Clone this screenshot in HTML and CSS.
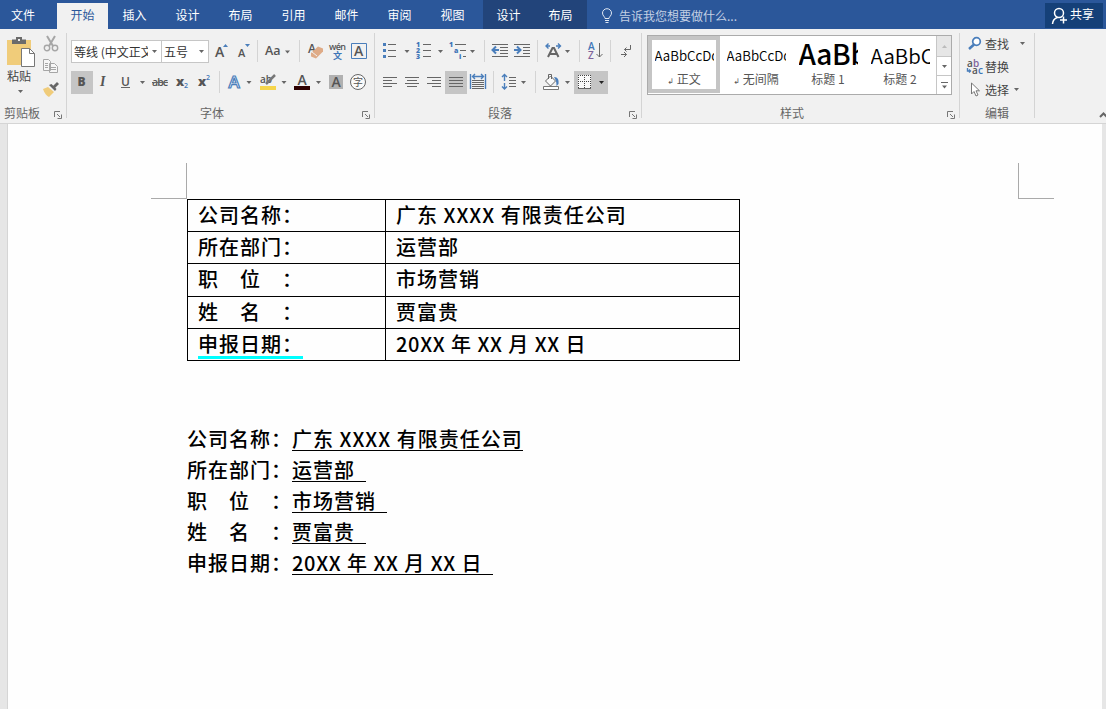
FILE: index.html
```html
<!DOCTYPE html>
<html lang="zh-CN">
<head>
  <meta charset="UTF-8">
  <title>Word</title>
  <link rel="stylesheet" href="styles.css">
</head>
<body>
  <nav class="tabs">
    <a class="tab file">文件</a>
    <a class="tab active">开始</a>
    <a class="tab">插入</a>
    <a class="tab">设计</a>
    <a class="tab">布局</a>
    <a class="tab">引用</a>
    <a class="tab">邮件</a>
    <a class="tab">审阅</a>
    <a class="tab">视图</a>
    <div class="table-tools">
      <a class="tab">设计</a>
      <a class="tab">布局</a>
    </div>
    <div class="tell-me">
      <svg width="12" height="16" viewBox="0 0 12 16"><path d="M4 10.500c0-2-2.500-2.500-2.500-5.500a4.500 4.300 0 0 1 9 0c0 3-2.500 3.500-2.500 5.500zM4 12.500h4M4.500 14.500h3" class="line-white"/></svg>
      <span>告诉我您想要做什么...</span>
    </div>
    <button class="share">
      <svg width="17" height="18" viewBox="0 0 17 18"><circle cx="8" cy="6" r="4.500" class="person"/><path d="M1.500 17c.3-3.500 2-5.800 5-6.500M12.500 9.500v7M9 13h7" class="person"/></svg>
      <span>共享</span>
    </button>
  </nav>

  <div class="ribbon">
    <section class="group clipboard">
      <div class="clip-body">
        <div class="paste">
          <svg width="30" height="32" viewBox="0 0 30 32">
            <path d="M2 4h24v25H2z" fill="#f0cc7a"/>
            <path d="M7 8V3.500h4V1h6v2.500h4V8z" fill="#6b6b6b"/>
            <path d="M13 3h2v2h-2z" fill="#f1f1f1"/>
            <path d="M16.500 12.500h8l5 5v13h-13z" fill="#fff" stroke="#777"/>
            <path d="M24.500 12.500v5h5" fill="none" stroke="#777"/>
          </svg>
          <span>粘贴</span>
          <svg width="5" height="3" viewBox="0 0 5 3"><path d="M0 0h5L2.500 3z" class="caret"/></svg>
        </div>
        <div class="clip-side">
          <svg width="18" height="18" viewBox="0 0 18 18"><path d="M5 1l6 10M13 1L7 11" stroke="#a6a6a6" stroke-width="2" fill="none"/><circle cx="5" cy="13" r="2.700" class="ring"/><circle cx="13" cy="13" r="2.700" class="ring"/></svg>
          <svg width="18" height="18" viewBox="0 0 18 18"><path d="M1.500 1.500h5l2 2v9h-7zM7.500 5.500h5l3 3v6h-8z" fill="#f6f6f6" stroke="#a6a6a6"/><path d="M3 5.500h3M3 7.500h3M3 9.500h3M9 9.500h5M9 11.500h5" stroke="#a6a6a6"/></svg>
          <svg width="18" height="18" viewBox="0 0 18 18"><path d="M1 8l5-2 6 5-5 5c-2-1-5-4-6-8z" fill="#f0cc7a"/><path d="M7 4l6 6 1.500-2-5-5z" fill="#666"/><path d="M10 6l5-5 2 2-5 5z" fill="#666"/></svg>
        </div>
      </div>
      <div class="label">剪贴板<svg class="launcher" width="8" height="8" viewBox="0 0 8 8"><path d="M.5 6V.500H6M3 3l3 3M7.500 3.500v4h-4" /></svg></div>
    </section>

    <section class="group font">
      <div class="row">
        <div class="combo name"><span>等线 (中文正文)</span><svg width="5" height="3" viewBox="0 0 5 3"><path d="M0 0h5L2.500 3z" class="caret"/></svg></div>
        <div class="combo size"><span>五号</span><svg width="5" height="3" viewBox="0 0 5 3"><path d="M0 0h5L2.500 3z" class="caret"/></svg></div>
        <svg width="23" height="23"><text x="6" y="17" font-size="14" class="g">A</text><path d="M14 7h5l-2.500-3z" class="blue"/></svg>
        <svg width="23" height="23"><text x="6" y="17" font-size="11" class="g">A</text><path d="M13 4h5l-2.500 3z" class="blue"/></svg>
        <i class="sep after"></i>
        <svg width="41" height="23"><text x="7" y="15" font-size="12.500" class="g">Aa</text><path d="M27 10.500h5l-2.500 3z" class="caret"/></svg>
        <i class="sep"></i>
        <svg width="25" height="23"><text x="8" y="13" font-size="12" class="g">A</text><path d="M11 13l7-6.500 5 2v3l-7 7-5-2z" fill="#dfab87"/><path d="M12 12l5 4" stroke="#f1f1f1"/></svg>
        <svg width="23" height="23"><text x="4" y="10" font-size="9" class="g" textLength="17">wén</text><text x="8" y="19" font-size="9" class="b cjk">文</text></svg>
        <svg width="23" height="23"><path d="M3.500 3.500h15v15h-15z" fill="none" stroke="#4a7ebb"/><text x="6" y="16" font-size="14" class="g">A</text></svg>
      </div>
      <div class="row">
        <svg class="on" width="22" height="23"><text x="6.500" y="15" font-size="12" class="g bold">B</text></svg>
        <svg width="22" height="23"><text x="7" y="15" font-size="14" class="g italic">I</text></svg>
        <svg width="33" height="23"><text x="6" y="15" font-size="12" class="g">U</text><path d="M6 16.500h9" class="gl"/><path d="M25 10h5l-2.500 3z" class="caret"/></svg>
        <svg width="23" height="23"><text x="4" y="15" font-size="10.500" class="g" textLength="16">abc</text><path d="M4 11.500h16" class="gl"/></svg>
        <svg width="22" height="23"><text x="5" y="15" font-size="13" class="g bold">x</text><text x="13" y="17" font-size="7" class="b">2</text></svg>
        <svg width="26" height="23"><text x="5" y="15" font-size="13" class="g bold">x</text><text x="13" y="9" font-size="7" class="b">2</text></svg>
        <i class="sep"></i>
        <svg width="34" height="23"><text x="8.500" y="17" font-size="17" class="outline">A</text><path d="M26.500 10h5L29 13z" class="caret"/></svg>
        <svg width="35" height="23"><text x="6" y="11.500" font-size="10" class="g">ab</text><path d="M21 4l-9 9" stroke="#777" stroke-width="2.500"/><path d="M6 15h16v4H6z" fill="#f5d54c"/><path d="M27.500 10h5L30 13z" class="caret"/></svg>
        <svg width="35" height="23"><text x="8.500" y="14" font-size="14" class="g">A</text><path d="M5 15h16v4H5z" fill="#2d0000"/><path d="M27 10h5l-2.500 3z" class="caret"/></svg>
        <svg width="23" height="23"><path d="M5 4h14v14H5z" fill="#b1b1b1"/><text x="7.500" y="16" font-size="14" class="g">A</text></svg>
        <svg width="23" height="23"><circle cx="11" cy="11" r="7.500" fill="#fafafa" stroke="#666"/><text x="6" y="15" font-size="10" class="g thin cjk">字</text></svg>
      </div>
      <div class="label">字体<svg class="launcher" width="8" height="8" viewBox="0 0 8 8"><path d="M.5 6V.500H6M3 3l3 3M7.500 3.500v4h-4" /></svg></div>
    </section>

    <section class="group para">
      <div class="row">
        <svg width="34" height="23"><path d="M4 3h3v3H4zM4 9h3v3H4zM4 15h3v3H4z" class="blue"/><path d="M9 4.500h8M9 10.500h8M9 16.500h8" class="gl"/><path d="M25.500 10h5L28 13z" class="caret"/></svg>
        <svg width="34" height="23"><text x="3" y="7" font-size="7" class="b bold">1</text><text x="3" y="13" font-size="7" class="b bold">2</text><text x="3" y="19" font-size="7" class="b bold">3</text><path d="M10 4.500h8M10 10.500h8M10 16.500h8" class="gl"/><path d="M25 10h5l-2.500 3z" class="caret"/></svg>
        <svg width="37" height="23"><text x="2" y="7" font-size="7" class="b bold">1</text><text x="7" y="13" font-size="7" class="b bold">a</text><text x="12" y="19" font-size="7" class="b bold">i</text><path d="M8 4.500h11M13 10.500h6M16 16.500h3" class="gl"/><path d="M23 10h5l-2.500 3z" class="caret"/></svg>
        <i class="sep"></i>
        <svg width="26" height="23"><path d="M7 4.500h16M15 7.500h8M15 10.500h8M15 13.500h8M7 16.500h16" class="gl"/><path d="M14 10H8M11 6.500L7.500 10l3.500 3.500" class="bl"/></svg>
        <svg width="26" height="23"><path d="M3 4.500h16M12 7.500h7M12 10.500h7M12 13.500h7M3 16.500h16" class="gl"/><path d="M3 10h6M6 6.500l3.500 3.500L6 13.500" class="bl"/></svg>
        <i class="sep"></i>
        <svg width="41" height="23"><path d="M10 17l4.500-9h1.500l4.500 9M12 14h6.500" class="gl thick"/><path d="M12 6H8M10.500 3.500L8 6l2.500 2.500M18 6h4.500M20 3.500L22.500 6 20 8.500" class="bl thin-line"/><path d="M27 10h5l-2.500 3z" class="caret"/></svg>
        <i class="sep"></i>
        <svg width="30" height="23"><text x="8" y="10" font-size="10" class="b">A</text><text x="8" y="18.500" font-size="10" class="purple">Z</text><path d="M19.500 3v14M16.500 14l3 3 3-3" class="gl"/></svg>
        <i class="sep"></i>
        <svg width="26" height="23"><path d="M19.500 5v4.500h-6M15.500 7.500l-2 2 2 2M10 14.500h5.500M13 12l2.500 2.500L13 17" class="gl thin-line"/></svg>
      </div>
      <div class="row">
        <svg width="22" height="23"><path d="M4 6.500h14M4 9.500h9M4 12.500h14M4 15.500h9" class="gl"/></svg>
        <svg width="22" height="23"><path d="M4 6.500h14M6 9.500h10M4 12.500h14M6 15.500h10" class="gl"/></svg>
        <svg width="22" height="23"><path d="M4 6.500h14M9 9.500h9M4 12.500h14M9 15.500h9" class="gl"/></svg>
        <svg class="on" width="22" height="23"><path d="M4 6.500h14M4 9.500h14M4 12.500h14M4 15.500h14" class="gl"/></svg>
        <svg width="26" height="23"><path d="M3.500 3v15M18.500 3v15M6 5.500h10M8 3L5.500 5.500 8 8M14 3l2.500 2.500L14 8" class="bl thin-line"/><path d="M5 9.500h12M5 11.500h12M5 13.500h12M5 15.500h12M5 17.500h12" class="gl"/></svg>
        <i class="sep"></i>
        <svg width="41" height="23"><path d="M10.500 4v6M8 6l2.500-2.500L13 6M10.500 12v6M8 15.500l2.500 2.500 2.500-2.500" class="bl thin-line"/><path d="M15 6.500h7M15 9.500h7M15 12.500h7M15 15.500h7" class="gl"/><path d="M27 10h5l-2.500 3z" class="caret"/></svg>
        <i class="sep"></i>
        <svg width="38" height="23"><path d="M9.500 10l5-5 5 5-5 5zM12.500 8V3.500h3V8" fill="#fafafa" stroke="#666"/><path d="M18 6c4 0 5 3 4.500 7l-2 2c0-3 0-5-2.500-9z" class="blue"/><path d="M7.500 15.500h15v3h-15z" fill="#fff" stroke="#777"/><path d="M29 10h5l-2.500 3z" class="caret"/></svg>
        <svg class="on" width="34" height="23"><path d="M4 4h13v14H4z" fill="#fafafa"/><path d="M4 4.500h13M4 10.500h13M4.500 4v13M10.500 4v13M16.500 4v13" stroke="#444" stroke-dasharray="1 1"/><path d="M4 17.500h13" class="gl"/><path d="M25 10h5l-2.500 3z" fill="#222"/></svg>
      </div>
      <div class="label">段落<svg class="launcher" width="8" height="8" viewBox="0 0 8 8"><path d="M.5 6V.500H6M3 3l3 3M7.500 3.500v4h-4" /></svg></div>
    </section>

    <section class="group styles">
      <div class="gallery">
        <div class="style selected"><b class="sample">AaBbCcDd</b><span><em>↲</em> 正文</span></div>
        <div class="style"><b class="sample">AaBbCcDd</b><span><em>↲</em> 无间隔</span></div>
        <div class="style"><b class="sample h1">AaBb</b><span>标题 1</span></div>
        <div class="style"><b class="sample h2">AaBbC</b><span>标题 2</span></div>
        <div class="scroll">
          <div class="off"><svg width="5" height="3" viewBox="0 0 5 3"><path d="M0 3h5L2.500 0z" fill="#bbb"/></svg></div>
          <div><svg width="5" height="3" viewBox="0 0 5 3"><path d="M0 0h5L2.500 3z" class="caret"/></svg></div>
          <div><svg width="7" height="7" viewBox="0 0 7 7"><path d="M0 .5h7" class="gl"/><path d="M1 3.500h5L3.500 6.500z" class="caret"/></svg></div>
        </div>
      </div>
      <div class="label">样式<svg class="launcher" width="8" height="8" viewBox="0 0 8 8"><path d="M.5 6V.500H6M3 3l3 3M7.500 3.500v4h-4" /></svg></div>
    </section>

    <section class="group editing">
      <div class="cmd">
        <svg width="18" height="18" viewBox="0 0 18 18"><circle cx="10.500" cy="6.500" r="3.800" fill="#fff" stroke="#4a7ebb" stroke-width="1.700"/><path d="M8 9.500L3 14" stroke="#4a7ebb" stroke-width="2.500"/></svg>
        <span>查找</span><svg class="wide" width="5" height="3" viewBox="0 0 5 3"><path d="M0 0h5L2.500 3z" class="caret"/></svg>
      </div>
      <div class="cmd">
        <svg width="18" height="18" viewBox="0 0 18 18"><text x="1" y="8.500" font-size="10" class="g">a</text><text x="7" y="8.500" font-size="10" class="purple">b</text><text x="6" y="16" font-size="10" class="g">a</text><text x="12" y="16" font-size="10" class="b">c</text><path d="M1.500 10v3h3M3 11.500L4.500 13 3 14.500" class="bl thin-line"/></svg>
        <span>替换</span>
      </div>
      <div class="cmd">
        <svg width="18" height="18" viewBox="0 0 18 18"><path d="M5.500 2v11l2.500-2.500 2 4.500 2-1-2-4.200h3.500z" fill="#fff" stroke="#777"/></svg>
        <span>选择</span><svg class="near" width="5" height="3" viewBox="0 0 5 3"><path d="M0 0h5L2.500 3z" class="caret"/></svg>
      </div>
      <div class="label">编辑</div>
    </section>
    <svg class="collapse" width="8" height="6" viewBox="0 0 8 6"><path d="M1 5l3.500-3.500L8 5" fill="none" stroke="#666" stroke-width="2"/></svg>
  </div>

  <main class="desk">
    <article class="page">
      <div class="crop-marks"><i class="mark left"></i><i class="mark right"></i></div>
      <table class="info">
        <tr><td>公司名称：</td><td>广东 XXXX 有限责任公司</td></tr>
        <tr><td>所在部门：</td><td>运营部</td></tr>
        <tr class="tall"><td>职　位　：</td><td>市场营销</td></tr>
        <tr><td>姓　名　：</td><td>贾富贵</td></tr>
        <tr><td><span class="cyan">申报日期：</span></td><td><span class="lat">20XX</span> 年 <span class="lat">XX</span> 月 <span class="lat">XX</span> 日</td></tr>
      </table>
      <div class="lines">
        <p>公司名称：<u>广东 XXXX 有限责任公司</u></p>
        <p>所在部门：<u class="trail">运营部</u></p>
        <p>职　位　：<u class="trail">市场营销</u></p>
        <p>姓　名　：<u class="trail">贾富贵</u></p>
        <p>申报日期：<u class="trail"><span class="lat">20XX</span> 年 <span class="lat">XX</span> 月 <span class="lat">XX</span> 日</u></p>
      </div>
    </article>
  </main>
</body>
</html>
```
FILE: styles.css
```css
* {
  box-sizing: border-box;
}

body {
  margin: 0;
  height: 709px;
  overflow: hidden;
  display: flex;
  flex-direction: column;
  font-family: "Noto Sans CJK SC", sans-serif;
  font-size: 12px;
  color: #444;
  background-color: #e6e6e6;
}

svg {
  display: block;
  flex: none;
}

/* tabs */
.tabs {
  display: flex;
  height: 29px;
  padding-top: 3px;
  background-color: #2b579a;
  color: #fff;
}

.tab {
  width: 53px;
  line-height: 23px;
  text-align: center;
}

.tab.file {
  width: 46px;
  margin-right: 11px;
}

.tab.active {
  width: 51px;
  background-color: #f1f1f1;
  color: #2b579a;
}

.table-tools {
  display: flex;
  width: 104px;
  margin: -3px 0 0 4px;
  padding-top: 3px;
  background-color: #22447a;
}

.table-tools .tab {
  width: 51px;
}

.table-tools .tab + .tab {
  width: 53px;
}

.tell-me {
  display: flex;
  align-items: center;
  gap: 6px;
  margin-left: 14px;
  padding-bottom: 2px;
  color: #c3d0e4;
}

.tell-me svg {
  margin-top: 2px;
}

.share {
  display: flex;
  align-items: center;
  gap: 2px;
  width: 58px;
  height: 25px;
  margin: 0 3px 0 auto;
  padding: 0 0 5px 6px;
  border: none;
  background-color: #154078;
  color: #fff;
  font: inherit;
}

.share svg {
  margin-top: 5px;
}

.line-white,
.person {
  fill: none;
  stroke: #dfe7f3;
}

.person {
  stroke: #fff;
  stroke-width: 1.5;
}

/* ribbon */
.ribbon {
  display: flex;
  height: 95px;
  padding-top: 4px;
  background-color: #f1f1f1;
  border-bottom: 1px solid #d5d5d5;
}

.group {
  display: flex;
  flex-direction: column;
  height: 85px;
  padding: 7px 0 0 4px;
  border-right: 1px solid #d4d4d4;
}

.clipboard {
  width: 67px;
  padding-top: 0;
}

.font {
  width: 308px;
}

.para {
  width: 267px;
}

.styles {
  width: 318px;
  padding: 2px 0 0 5px;
}

.editing {
  width: 75px;
  padding: 0 0 0 6px;
}

.row {
  display: flex;
  height: 23px;
  margin-bottom: 8px;
}

.label {
  display: flex;
  justify-content: center;
  margin-top: auto;
  height: 12px;
  line-height: 13px;
  color: #666;
}

.launcher {
  margin: 5px 4px -1px auto;
  fill: none;
  stroke: #777;
}

/* the launcher sits at the right, so the text keeps its own centre */
.font .label {
  padding-left: 129px;
}

.para .label {
  padding-left: 109px;
}

.styles .label {
  padding-left: 133px;
}

.editing .label {
  padding-right: 6px;
}

.sep {
  width: 1px;
  height: 22px;
  background-color: #d4d4d4;
}

.sep.after {
  margin-left: 2px;
}

.on {
  background-color: #c5c5c5;
}

.clip-body {
  display: flex;
  height: 66px;
}

.paste {
  display: flex;
  flex-direction: column;
  align-items: center;
  width: 34px;
  margin-left: -1px;
  padding-top: 3px;
}

.paste span {
  line-height: 18px;
  margin: -1px 0 0 -2px;
}

.paste > svg:last-child {
  margin: 5px 0 0 1px;
}

.clip-side {
  display: flex;
  flex-direction: column;
  gap: 5px;
  padding: 2px 0 0 5px;
}

.ring {
  fill: none;
  stroke: #a6a6a6;
  stroke-width: 1.4;
}

.combo {
  display: flex;
  align-items: center;
  justify-content: space-between;
  padding: 0 4px 0 2px;
  border: 1px solid #c6c6c6;
  background-color: #fff;
  color: #333;
}

.combo span {
  overflow: hidden;
  white-space: nowrap;
}

.combo.name {
  width: 91px;
}

.combo.name span {
  width: 74px;
}

.combo.size {
  width: 48px;
  margin-left: -1px;
}

.caret {
  fill: #666;
}

.blue {
  fill: #4a7ebb;
}

.gl {
  fill: none;
  stroke: #666;
}

.bl {
  fill: none;
  stroke: #4a7ebb;
  stroke-width: 2;
}

.thick {
  stroke-width: 2;
}

.bl.thin-line {
  stroke-width: 1.4;
}

svg text {
  font-family: "Open Sans", sans-serif;
  font-weight: 600;
}

svg text.cjk {
  font-family: "Noto Sans CJK SC", sans-serif;
}

.g {
  fill: #555;
}

.b {
  fill: #3f76b8;
}

.purple {
  fill: #80639b;
}

svg text.bold {
  font-weight: 800;
}

svg text.italic {
  font-family: "Liberation Serif", serif;
  font-style: italic;
  font-weight: bold;
}

svg text.thin {
  font-weight: 400;
}

.outline {
  fill: #fff;
  stroke: #4a7ebb;
  stroke-width: 1.2;
}

/* style gallery */
.gallery {
  display: flex;
  width: 305px;
  height: 60px;
  border: 1px solid #ababab;
  background-color: #fff;
}

.style {
  display: flex;
  flex-direction: column;
  align-items: center;
  width: 72px;
  height: 57px;
  padding: 4px;
  border: 0 solid #c5c5c5;
}

.style.selected {
  padding: 0;
  border-width: 4px;
}

.sample {
  display: block;
  width: 59px;
  height: 30px;
  overflow: hidden;
  white-space: nowrap;
  font-size: 13.3px;
  font-weight: 350;
  line-height: 31px;
  color: #000;
}

.sample.h1 {
  font-size: 28px;
  font-weight: 500;
  line-height: 27px;
  letter-spacing: -0.3px;
}

.sample.h2 {
  font-size: 20.5px;
  font-weight: 350;
  line-height: 30px;
}

.style span {
  line-height: 18px;
  color: #555;
}

.style em {
  font: 8px "DejaVu Sans", sans-serif;
}

.scroll {
  width: 15px;
  margin-left: auto;
  border-left: 1px solid #c6c6c6;
}

.scroll div {
  display: flex;
  align-items: center;
  justify-content: center;
  height: 19px;
  border-bottom: 1px solid #c6c6c6;
}

.scroll div.off {
  height: 21px;
  background-color: #e6e6e6;
}

.scroll div:last-child {
  height: 18px;
  border: none;
}

/* editing */
.cmd {
  display: flex;
  align-items: center;
  height: 23px;
  line-height: 20px;
}

.cmd:first-child {
  margin-top: -1px;
}

.cmd span {
  margin-left: 1px;
}

.cmd .wide {
  margin-left: 11px;
}

.cmd .near {
  margin-left: 5px;
}

.collapse {
  margin: 79px -1px 0 auto;
}

/* document */
.desk {
  flex: 1;
  padding: 0 4px 0 7px;
}

.page {
  height: 100%;
  padding: 39px 48px 0 144px;
  background-color: #fefefe;
  border-left: 1px solid #d5d5d5;
  color: #000;
  font-size: 20px;
  font-weight: 500;
  letter-spacing: 1px;
}

.crop-marks {
  display: flex;
  justify-content: space-between;
  margin-left: -1px;
}

.mark {
  width: 36px;
  height: 36px;
  border-bottom: 1px solid #aaa;
}

.mark.left {
  border-right: 1px solid #aaa;
}

.mark.right {
  border-left: 1px solid #aaa;
}

.info {
  width: 553px;
  margin-left: 35px;
  table-layout: fixed;
  border-spacing: 0;
  border: solid #000;
  border-width: 1px 0 0 1px;
}

.info td {
  height: 32px;
  padding: 0 0 2px 10px;
  border: solid #000;
  border-width: 0 1px 1px 0;
  line-height: 29px;
  white-space: nowrap;
}

.info .tall td {
  height: 33px;
  padding-bottom: 3px;
}

.info td:first-child {
  width: 198px;
}

.cyan {
  display: block;
  width: 105px;
  height: 30px;
  border-bottom: 3px solid #00ffff;
  margin-bottom: -1px;
}

/* latin runs in the dates are set a little tighter */
.lat {
  letter-spacing: 0.7px;
}

.lines {
  margin: 63px 0 0 35px;
}

.lines p {
  margin: 0;
  height: 31px;
  line-height: 29px;
}

.lines u {
  display: inline-block;
  height: 27px;
  border-bottom: 1px solid #000;
  text-decoration: none;
}

.lines .trail {
  padding-right: 11px;
}
```
